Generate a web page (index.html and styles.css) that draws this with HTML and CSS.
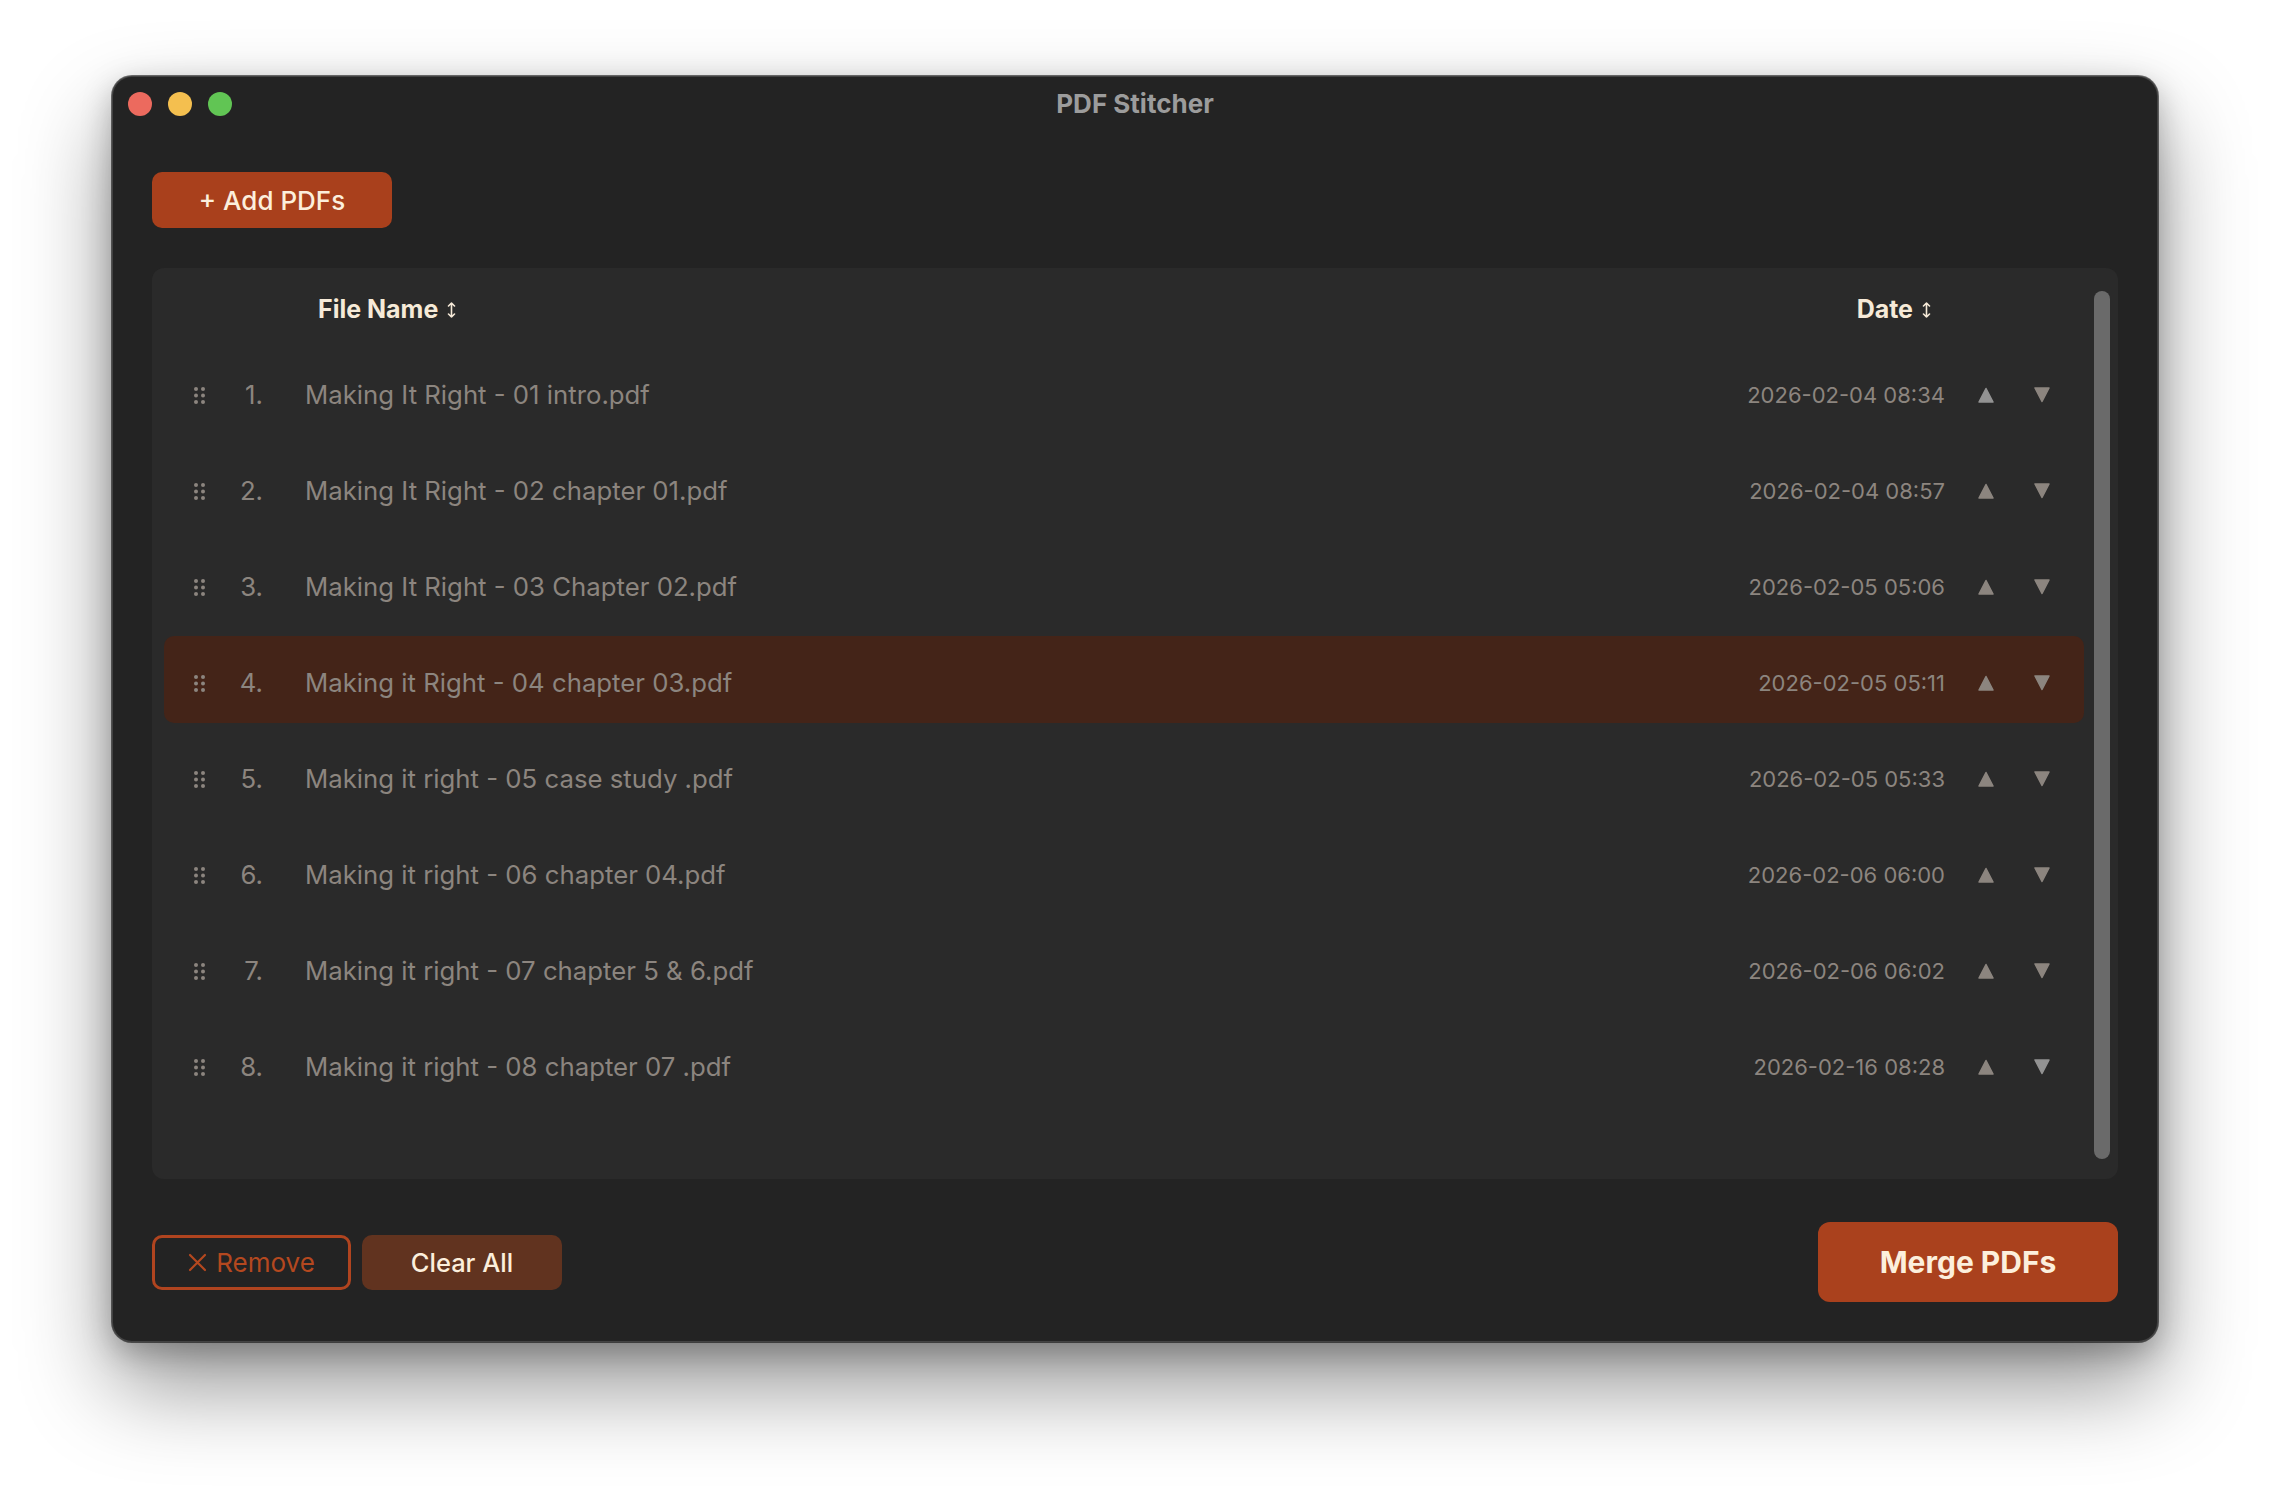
FILE: index.html
```html
<!DOCTYPE html>
<html lang="en">
<head>
<meta charset="utf-8">
<title>PDF Stitcher</title>
<link rel="stylesheet" href="styles.css">
</head>
<body>
<div class="desktop">
  <div class="window">
    <div class="titlebar">
      <div class="lights">
        <span class="light red"></span>
        <span class="light yellow"></span>
        <span class="light green"></span>
      </div>
      <div class="title">PDF Stitcher</div>
    </div>
    <div class="content">
      <div class="toolbar">
        <button class="btn btn-add">+ Add PDFs</button>
      </div>
      <div class="panel">
        <div class="list">
          <div class="list-header">
            <div class="hcell">File Name <svg class="sort" viewBox="0 0 9 16" width="9" height="16"><path d="M4.5 1v14M1.5 4l3-3 3 3M1.5 12l3 3 3-3" fill="none" stroke="currentColor" stroke-width="1.6" stroke-linecap="round" stroke-linejoin="round"/></svg></div>
            <div class="hcell">Date <svg class="sort" viewBox="0 0 9 16" width="9" height="16"><path d="M4.5 1v14M1.5 4l3-3 3 3M1.5 12l3 3 3-3" fill="none" stroke="currentColor" stroke-width="1.6" stroke-linecap="round" stroke-linejoin="round"/></svg></div>
          </div>

          <div class="row">
            <svg class="grip" viewBox="0 0 11 17" width="11" height="17"><g fill="currentColor"><circle cx="2" cy="2" r="2"/><circle cx="9" cy="2" r="2"/><circle cx="2" cy="8.5" r="2"/><circle cx="9" cy="8.5" r="2"/><circle cx="2" cy="15" r="2"/><circle cx="9" cy="15" r="2"/></g></svg>
            <span class="num">1.</span>
            <span class="name">Making It Right - 01 intro.pdf</span>
            <span class="date">2026-02-04 08:34</span>
            <span class="arrow up dim"><svg viewBox="0 0 16 16" width="16" height="16"><path d="M8 1.5L15 15H1Z" fill="currentColor" stroke="currentColor" stroke-width="1.5" stroke-linejoin="round"/></svg></span>
            <span class="arrow down"><svg viewBox="0 0 16 16" width="16" height="16"><path d="M1 1H15L8 14.5Z" fill="currentColor" stroke="currentColor" stroke-width="1.5" stroke-linejoin="round"/></svg></span>
          </div>

          <div class="row">
            <svg class="grip" viewBox="0 0 11 17" width="11" height="17"><g fill="currentColor"><circle cx="2" cy="2" r="2"/><circle cx="9" cy="2" r="2"/><circle cx="2" cy="8.5" r="2"/><circle cx="9" cy="8.5" r="2"/><circle cx="2" cy="15" r="2"/><circle cx="9" cy="15" r="2"/></g></svg>
            <span class="num">2.</span>
            <span class="name">Making It Right - 02 chapter 01.pdf</span>
            <span class="date">2026-02-04 08:57</span>
            <span class="arrow up"><svg viewBox="0 0 16 16" width="16" height="16"><path d="M8 1.5L15 15H1Z" fill="currentColor" stroke="currentColor" stroke-width="1.5" stroke-linejoin="round"/></svg></span>
            <span class="arrow down"><svg viewBox="0 0 16 16" width="16" height="16"><path d="M1 1H15L8 14.5Z" fill="currentColor" stroke="currentColor" stroke-width="1.5" stroke-linejoin="round"/></svg></span>
          </div>

          <div class="row">
            <svg class="grip" viewBox="0 0 11 17" width="11" height="17"><g fill="currentColor"><circle cx="2" cy="2" r="2"/><circle cx="9" cy="2" r="2"/><circle cx="2" cy="8.5" r="2"/><circle cx="9" cy="8.5" r="2"/><circle cx="2" cy="15" r="2"/><circle cx="9" cy="15" r="2"/></g></svg>
            <span class="num">3.</span>
            <span class="name">Making It Right - 03 Chapter 02.pdf</span>
            <span class="date">2026-02-05 05:06</span>
            <span class="arrow up"><svg viewBox="0 0 16 16" width="16" height="16"><path d="M8 1.5L15 15H1Z" fill="currentColor" stroke="currentColor" stroke-width="1.5" stroke-linejoin="round"/></svg></span>
            <span class="arrow down"><svg viewBox="0 0 16 16" width="16" height="16"><path d="M1 1H15L8 14.5Z" fill="currentColor" stroke="currentColor" stroke-width="1.5" stroke-linejoin="round"/></svg></span>
          </div>

          <div class="row selected">
            <svg class="grip" viewBox="0 0 11 17" width="11" height="17"><g fill="currentColor"><circle cx="2" cy="2" r="2"/><circle cx="9" cy="2" r="2"/><circle cx="2" cy="8.5" r="2"/><circle cx="9" cy="8.5" r="2"/><circle cx="2" cy="15" r="2"/><circle cx="9" cy="15" r="2"/></g></svg>
            <span class="num">4.</span>
            <span class="name">Making it Right - 04 chapter 03.pdf</span>
            <span class="date">2026-02-05 05:11</span>
            <span class="arrow up"><svg viewBox="0 0 16 16" width="16" height="16"><path d="M8 1.5L15 15H1Z" fill="currentColor" stroke="currentColor" stroke-width="1.5" stroke-linejoin="round"/></svg></span>
            <span class="arrow down"><svg viewBox="0 0 16 16" width="16" height="16"><path d="M1 1H15L8 14.5Z" fill="currentColor" stroke="currentColor" stroke-width="1.5" stroke-linejoin="round"/></svg></span>
          </div>

          <div class="row">
            <svg class="grip" viewBox="0 0 11 17" width="11" height="17"><g fill="currentColor"><circle cx="2" cy="2" r="2"/><circle cx="9" cy="2" r="2"/><circle cx="2" cy="8.5" r="2"/><circle cx="9" cy="8.5" r="2"/><circle cx="2" cy="15" r="2"/><circle cx="9" cy="15" r="2"/></g></svg>
            <span class="num">5.</span>
            <span class="name">Making it right - 05 case study .pdf</span>
            <span class="date">2026-02-05 05:33</span>
            <span class="arrow up"><svg viewBox="0 0 16 16" width="16" height="16"><path d="M8 1.5L15 15H1Z" fill="currentColor" stroke="currentColor" stroke-width="1.5" stroke-linejoin="round"/></svg></span>
            <span class="arrow down"><svg viewBox="0 0 16 16" width="16" height="16"><path d="M1 1H15L8 14.5Z" fill="currentColor" stroke="currentColor" stroke-width="1.5" stroke-linejoin="round"/></svg></span>
          </div>

          <div class="row">
            <svg class="grip" viewBox="0 0 11 17" width="11" height="17"><g fill="currentColor"><circle cx="2" cy="2" r="2"/><circle cx="9" cy="2" r="2"/><circle cx="2" cy="8.5" r="2"/><circle cx="9" cy="8.5" r="2"/><circle cx="2" cy="15" r="2"/><circle cx="9" cy="15" r="2"/></g></svg>
            <span class="num">6.</span>
            <span class="name">Making it right - 06 chapter 04.pdf</span>
            <span class="date">2026-02-06 06:00</span>
            <span class="arrow up"><svg viewBox="0 0 16 16" width="16" height="16"><path d="M8 1.5L15 15H1Z" fill="currentColor" stroke="currentColor" stroke-width="1.5" stroke-linejoin="round"/></svg></span>
            <span class="arrow down"><svg viewBox="0 0 16 16" width="16" height="16"><path d="M1 1H15L8 14.5Z" fill="currentColor" stroke="currentColor" stroke-width="1.5" stroke-linejoin="round"/></svg></span>
          </div>

          <div class="row">
            <svg class="grip" viewBox="0 0 11 17" width="11" height="17"><g fill="currentColor"><circle cx="2" cy="2" r="2"/><circle cx="9" cy="2" r="2"/><circle cx="2" cy="8.5" r="2"/><circle cx="9" cy="8.5" r="2"/><circle cx="2" cy="15" r="2"/><circle cx="9" cy="15" r="2"/></g></svg>
            <span class="num">7.</span>
            <span class="name">Making it right - 07 chapter 5 &amp; 6.pdf</span>
            <span class="date">2026-02-06 06:02</span>
            <span class="arrow up"><svg viewBox="0 0 16 16" width="16" height="16"><path d="M8 1.5L15 15H1Z" fill="currentColor" stroke="currentColor" stroke-width="1.5" stroke-linejoin="round"/></svg></span>
            <span class="arrow down"><svg viewBox="0 0 16 16" width="16" height="16"><path d="M1 1H15L8 14.5Z" fill="currentColor" stroke="currentColor" stroke-width="1.5" stroke-linejoin="round"/></svg></span>
          </div>

          <div class="row">
            <svg class="grip" viewBox="0 0 11 17" width="11" height="17"><g fill="currentColor"><circle cx="2" cy="2" r="2"/><circle cx="9" cy="2" r="2"/><circle cx="2" cy="8.5" r="2"/><circle cx="9" cy="8.5" r="2"/><circle cx="2" cy="15" r="2"/><circle cx="9" cy="15" r="2"/></g></svg>
            <span class="num">8.</span>
            <span class="name">Making it right - 08 chapter 07 .pdf</span>
            <span class="date">2026-02-16 08:28</span>
            <span class="arrow up"><svg viewBox="0 0 16 16" width="16" height="16"><path d="M8 1.5L15 15H1Z" fill="currentColor" stroke="currentColor" stroke-width="1.5" stroke-linejoin="round"/></svg></span>
            <span class="arrow down dim"><svg viewBox="0 0 16 16" width="16" height="16"><path d="M1 1H15L8 14.5Z" fill="currentColor" stroke="currentColor" stroke-width="1.5" stroke-linejoin="round"/></svg></span>
          </div>
        </div>
        <div class="scrollbar"></div>
      </div>
      <div class="footer">
        <div class="footer-left">
          <button class="btn btn-remove"><svg viewBox="0 0 19 19" width="19" height="19"><path d="M2 2L17 17M17 2L2 17" fill="none" stroke="currentColor" stroke-width="2.2" stroke-linecap="round"/></svg>Remove</button>
          <button class="btn btn-clear">Clear All</button>
        </div>
        <button class="btn btn-merge">Merge PDFs</button>
      </div>
    </div>
  </div>
</div>
</body>
</html>
```
FILE: styles.css
```css
* { box-sizing: border-box; }

html, body {
  margin: 0;
  padding: 0;
  background: #ffffff;
  font-family: Inter, "Noto Sans", "Liberation Sans", sans-serif;
}

.desktop {
  width: 2270px;
  height: 1490px;
  padding: 76px 0 0 112px;
  background: #ffffff;
}

.window {
  width: 2046px;
  height: 1266px;
  background: #232323;
  border-radius: 20px;
  display: flex;
  flex-direction: column;
  box-shadow:
    0 0 0 1px rgba(0, 0, 0, 0.55),
    inset 0 0 0 1px rgba(255, 255, 255, 0.14),
    0 44px 90px rgba(0, 0, 0, 0.42),
    0 10px 30px rgba(0, 0, 0, 0.25);
}

.titlebar {
  height: 56px;
  display: flex;
  align-items: center;
  padding-left: 16px;
  position: relative;
}

.lights {
  display: flex;
  gap: 16px;
}

.light {
  width: 24px;
  height: 24px;
  border-radius: 50%;
  display: block;
}
.light.red { background: #ec6a5e; }
.light.yellow { background: #f4bf4f; }
.light.green { background: #61c554; }

.title {
  position: absolute;
  left: 0;
  right: 0;
  top: 0;
  height: 56px;
  line-height: 56px;
  text-align: center;
  font-size: 26px;
  font-weight: 700;
  color: #9c9c9c;
  pointer-events: none;
}

.content {
  flex: 1;
  display: flex;
  flex-direction: column;
  padding: 40px;
  min-height: 0;
}

.toolbar {
  display: flex;
  margin-bottom: 40px;
}

.btn {
  font-family: Inter, "Noto Sans", "Liberation Sans", sans-serif;
  border: none;
  cursor: pointer;
  display: inline-flex;
  align-items: center;
  justify-content: center;
}

.btn-add {
  width: 240px;
  height: 56px;
  border-radius: 10px;
  background: #a9401c;
  color: #fcefdc;
  font-size: 26px;
  font-weight: 500;
}

.panel {
  flex: 1;
  background: #2a2a2a;
  border-radius: 12px;
  display: flex;
  padding: 0 8px 0 12px;
  gap: 10px;
  min-height: 0;
}

.list {
  flex: 1;
  display: flex;
  flex-direction: column;
}

.list-header {
  height: 76px;
  margin-bottom: 4px;
  padding-top: 6px;
  display: flex;
  align-items: center;
  justify-content: space-between;
  padding-left: 154px;
  padding-right: 153px;
}

.hcell {
  font-size: 25px;
  font-weight: 700;
  color: #f6ead8;
  display: flex;
  align-items: center;
  gap: 9px;
}

.sort { display: block; margin-top: 1px; }

.row {
  height: 87px;
  margin-bottom: 9px;
  padding-top: 6px;
  border-radius: 10px;
  display: flex;
  align-items: center;
  color: #8c857f;
  font-size: 25.75px;
}

.row.selected {
  background: #442418;
}

.grip {
  display: block;
  margin-left: 30px;
  margin-top: 1px;
  color: #8c857f;
  flex: none;
}

.num {
  width: 58px;
  text-align: right;
  flex: none;
}

.name {
  flex: 1;
  margin-left: 42px;
  white-space: nowrap;
}

.date {
  font-size: 22px;
  text-align: right;
  white-space: nowrap;
  margin-top: 1px;
}

.arrow {
  width: 40px;
  height: 40px;
  display: flex;
  align-items: center;
  justify-content: center;
  color: #8c857f;
  flex: none;
}
.arrow.up { margin-left: 21px; }
.arrow.down { margin-left: 16px; margin-right: 22px; }
.arrow.dim { color: #939393; }
.arrow svg { display: block; }

.scrollbar {
  width: 16px;
  flex: none;
  margin: 23px 0 20px 0;
  border-radius: 8px;
  background: #6a6a6a;
}

.footer {
  height: 80px;
  margin-top: 43px;
  display: flex;
  align-items: center;
  justify-content: space-between;
}

.footer-left {
  display: flex;
  gap: 11px;
  align-items: center;
}

.btn-remove {
  width: 199px;
  height: 55px;
  border-radius: 10px;
  background: transparent;
  border: 3px solid #b0441f;
  color: #b4481f;
  font-size: 26px;
  font-weight: 400;
  gap: 9px;
}
.btn-remove svg { display: block; }

.btn-clear {
  width: 200px;
  height: 55px;
  border-radius: 10px;
  background: #61331f;
  color: #fcefdc;
  font-size: 25.5px;
  font-weight: 500;
}

.btn-merge {
  width: 300px;
  height: 80px;
  border-radius: 12px;
  background: #aa411d;
  color: #fcefdc;
  font-size: 30px;
  font-weight: 700;
}
```
